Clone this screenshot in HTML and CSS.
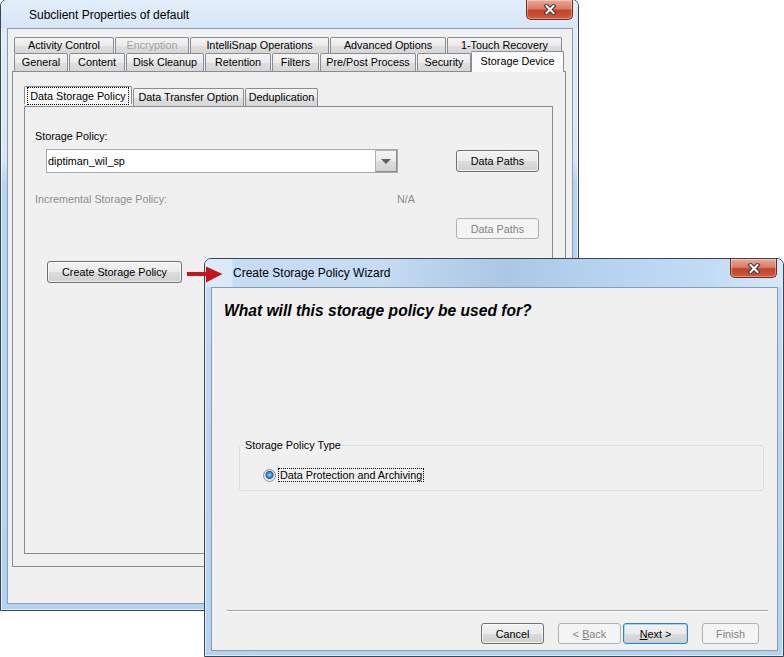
FILE: index.html
```html
<!DOCTYPE html>
<html>
<head>
<meta charset="utf-8">
<title>Subclient Properties of default</title>
<link rel="stylesheet" href="styles.css">
</head>
<body>
<div class="desktop">

	<!-- main properties dialog -->
	<div class="window props">
		<div class="titlebar">
			<span class="title">Subclient Properties of default</span>
			<span class="close">
				<svg width="14" height="11" viewBox="0 0 14 11"><path d="M3.5 2 L10.5 9 M10.5 2 L3.5 9" stroke="#3b3b3b" stroke-width="4.2" stroke-linecap="square"/><path d="M3.5 2 L10.5 9 M10.5 2 L3.5 9" stroke="#fff" stroke-width="2" stroke-linecap="square"/></svg>
			</span>
		</div>
		<div class="client">
			<div class="tabrow tabs-top">
				<span class="tab">Activity Control</span>
				<span class="tab disabled">Encryption</span>
				<span class="tab">IntelliSnap Operations</span>
				<span class="tab">Advanced Options</span>
				<span class="tab">1-Touch Recovery</span>
			</div>
			<div class="tabrow tabs-front">
				<span class="tab">General</span>
				<span class="tab">Content</span>
				<span class="tab">Disk Cleanup</span>
				<span class="tab">Retention</span>
				<span class="tab">Filters</span>
				<span class="tab">Pre/Post Process</span>
				<span class="tab">Security</span>
				<span class="tab selected">Storage Device</span>
			</div>
			<div class="tabpanel outer">
				<div class="tabrow tabs-inner">
					<span class="tab selected"><span class="focus">Data Storage Policy</span></span>
					<span class="tab">Data Transfer Option</span>
					<span class="tab">Deduplication</span>
				</div>
				<div class="tabpanel policy">
					<div class="field-label">Storage Policy:</div>
					<div class="policy-row">
						<div class="combo">
							<span class="combo-text">diptiman_wil_sp</span>
							<span class="combo-btn"><svg width="10" height="5" viewBox="0 0 10 5"><path d="M0 0 H10 L5 5 Z" fill="#606060"/></svg></span>
						</div>
						<button class="btn paths">Data Paths</button>
					</div>
					<div class="incr-row">
						<span class="muted incr-label">Incremental Storage Policy:</span>
						<span class="muted">N/A</span>
					</div>
					<div class="paths-row"><button class="btn paths" disabled>Data Paths</button></div>
					<button class="btn create">Create Storage Policy</button>
				</div>
			</div>
		</div>
	</div>

	<!-- wizard launched from the button -->
	<div class="window wizard">
		<div class="titlebar">
			<span class="title">Create Storage Policy Wizard</span>
			<span class="close">
				<svg width="14" height="11" viewBox="0 0 14 11"><path d="M3.5 2 L10.5 9 M10.5 2 L3.5 9" stroke="#3b3b3b" stroke-width="4.2" stroke-linecap="square"/><path d="M3.5 2 L10.5 9 M10.5 2 L3.5 9" stroke="#fff" stroke-width="2" stroke-linecap="square"/></svg>
			</span>
		</div>
		<div class="client">
			<h2 class="question">What will this storage policy be used for?</h2>
			<fieldset class="group">
				<legend>Storage Policy Type</legend>
				<label class="radio"><span class="radio-dot"></span><span class="focus">Data Protection and Archiving</span></label>
			</fieldset>
			<div class="footer">
				<div class="sep"></div>
				<div class="buttons">
					<button class="btn btn-cancel">Cancel</button>
					<button class="btn btn-back" disabled>&lt; <u>B</u>ack</button>
					<button class="btn btn-next"><u>N</u>ext &gt;</button>
					<button class="btn btn-finish" disabled>Finish</button>
				</div>
			</div>
		</div>
	</div>

	<svg class="pointer" width="36" height="17" viewBox="0 0 36 17">
		<rect x="0" y="6" width="20" height="4" fill="#c4161c"/>
		<path d="M19 0.5 L35.5 8 L19 16.5 Z" fill="#c4161c"/>
	</svg>

</div>
</body>
</html>
```

FILE: styles.css
```css
body {
	margin: 0;
	background: #fff;
	font-family: "Liberation Sans", Arial, sans-serif;
	font-size: 10.8px;
	color: #000;
}
.desktop {
	position: relative;
	width: 784px;
	height: 657px;
	overflow: hidden;
}

/* window chrome */
.window {
	position: absolute;
	box-sizing: border-box;
	display: flex;
	flex-direction: column;
	border: 1px solid #3a4554;
	border-radius: 7px 7px 0 0;
	box-shadow: inset 0 0 0 1px rgba(255, 255, 255, 0.6);
}
.props {
	left: 0;
	top: -1px;
	width: 579px;
	height: 612px;
	padding: 0 5px 6px 6px;
	background: linear-gradient(#dfebf8 0%, #d8e7f7 26%, #b7d4f3 30%, #b4d2f2 100%);
}
.wizard {
	left: 204px;
	top: 258px;
	width: 580px;
	height: 399px;
	padding: 0 5px 5px 6px;
	background: linear-gradient(#c4dbf3, #b4d2f2);
}
.titlebar {
	display: flex;
	justify-content: space-between;
	align-items: flex-start;
	height: 28px;
	margin: 0 -5px 0 -6px;
	padding-left: 28px;
	border-radius: 6px 6px 0 0;
	font-size: 12px;
	line-height: 14px;
}
.props .titlebar {
	background: linear-gradient(#e2edf9, #d7e6f7);
}
.wizard .titlebar {
	background: linear-gradient(to right, #dbeaf9 0%, #dbeaf9 4.5%, #c5dcf3 5%, #c5dcf3 30%, #aac7e5 52%, #b6d3f2 70%, #c3dcf5 88%, #d6e8f9 100%);
}
.props .title {
	padding-top: 8px;
}
.wizard .title {
	padding-top: 7px;
}
.close {
	display: flex;
	align-items: center;
	justify-content: center;
	box-sizing: border-box;
	width: 47px;
	height: 20px;
	margin-right: 5px;
	border: 1px solid #6e2b22;
	border-top: none;
	border-radius: 0 0 5px 5px;
	background: linear-gradient(#e9a899 0%, #dc7d68 45%, #c5422b 55%, #cf5a40 100%);
	box-shadow: inset 0 0 0 1px rgba(255, 255, 255, 0.35);
}
.wizard .close {
	width: 47px;
	height: 19px;
	margin-right: 6px;
}
.client {
	flex: 1;
	box-sizing: border-box;
	border: 1px solid #8a9bb0;
	background: #f0f0f0;
}

/* tabs */
.tabrow {
	display: flex;
	align-items: flex-start;
	gap: 1px;
}
.tab {
	box-sizing: border-box;
	border: 1px solid #898c95;
	border-bottom: none;
	border-radius: 2px 2px 0 0;
	background: linear-gradient(#f4f4f4 0%, #ebebeb 50%, #dfdfdf 51%, #d6d6d6 100%);
	text-align: center;
	white-space: nowrap;
}
.tab.disabled {
	color: #a3a3a3;
}
.tab.selected {
	position: relative;
	z-index: 1;
	height: 21px;
	margin-top: -2px;
	margin-bottom: -1px;
	background: #fbfbfb;
}
.tabs-top {
	margin: 8px 0 0 6px;
}
.tabs-top .tab {
	height: 16px;
	line-height: 15px;
}
.tabs-top .tab:nth-child(1) { width: 100px; }
.tabs-top .tab:nth-child(2) { width: 74px; }
.tabs-top .tab:nth-child(3) { width: 139px; }
.tabs-top .tab:nth-child(4) { width: 116px; }
.tabs-top .tab:nth-child(5) { width: 115px; }

.tabs-front {
	margin-left: 6px;
}
.tabs-front .tab {
	height: 18px;
	line-height: 17px;
}
.tabs-front .tab:nth-child(1) { width: 54px; }
.tabs-front .tab:nth-child(2) { width: 56px; }
.tabs-front .tab:nth-child(3) { width: 78px; }
.tabs-front .tab:nth-child(4) { width: 66px; }
.tabs-front .tab:nth-child(5) { width: 47px; }
.tabs-front .tab:nth-child(6) { width: 96px; }
.tabs-front .tab:nth-child(7) { width: 54px; }
.tabs-front .tab.selected {
	width: 93px;
	height: 21px;
	margin-left: -1px;
	line-height: 18px;
}

.tabpanel {
	box-sizing: border-box;
	border: 1px solid #898c95;
	background: #f0f0f0;
}
.outer {
	width: 554px;
	height: 496px;
	margin-left: 4px;
	padding: 16px 0 0 11px;
}
.tabs-inner .tab {
	height: 18px;
	line-height: 17px;
}
.tabs-inner .tab:nth-child(1) { width: 108px; }
.tabs-inner .tab:nth-child(2) { width: 111px; }
.tabs-inner .tab:nth-child(3) { width: 73px; }
.tabs-inner .tab.selected {
	display: flex;
	align-items: center;
	justify-content: center;
}
.focus {
	border: 1px dotted #000;
	padding: 0 1px;
	line-height: 12px;
}
.tabs-inner .focus {
	padding: 1px 2px;
	line-height: 14px;
}

/* data storage policy page */
.policy {
	width: 529px;
	height: 448px;
}
.field-label {
	margin: 22px 0 0 10px;
	line-height: 14px;
}
.policy-row {
	display: flex;
	align-items: center;
	margin-top: 6px;
}
.combo {
	display: flex;
	align-items: stretch;
	box-sizing: border-box;
	width: 352px;
	height: 24px;
	margin-left: 21px;
	border: 1px solid #a3a9b1;
	background: #fff;
}
.combo-text {
	flex: 1;
	padding-left: 1px;
	line-height: 22px;
}
.combo-btn {
	display: flex;
	align-items: center;
	justify-content: center;
	box-sizing: border-box;
	width: 22px;
	border: 1px solid #b1b1b1;
	border-right-color: #8c8c8c;
	border-bottom-color: #8c8c8c;
	background: linear-gradient(#f5f5f5 0%, #ececec 50%, #dedede 51%, #d2d2d2 100%);
}
.paths {
	width: 83px;
}
.policy-row .paths {
	margin-left: 58px;
}
.incr-row {
	display: flex;
	margin-top: 19px;
	padding-left: 10px;
	line-height: 14px;
}
.incr-label {
	width: 362px;
}
.muted {
	color: #8d8d8d;
}
.paths-row {
	margin: 12px 0 0 431px;
}
.paths-row .btn {
	height: 21px;
}
.create {
	width: 135px;
	margin: 22px 0 0 22px;
}

/* buttons */
.btn {
	box-sizing: border-box;
	display: block;
	height: 22px;
	padding: 0;
	border: 1px solid #707070;
	border-radius: 3px;
	background: linear-gradient(#f2f2f2 0%, #ebebeb 50%, #dddddd 51%, #cfcfcf 100%);
	box-shadow: inset 0 0 0 1px rgba(255, 255, 255, 0.65);
	font-family: inherit;
	font-size: inherit;
	color: #000;
}
.btn:disabled {
	border-color: #adb2b5;
	background: #f4f4f4;
	box-shadow: none;
	color: #838383;
}

/* wizard page */
.wizard .client {
	display: flex;
	flex-direction: column;
}
.question {
	margin: 13px 0 0 12px;
	font-size: 15.6px;
	font-style: italic;
	font-weight: bold;
	line-height: 20px;
}
.group {
	margin: 117px 13px 0 27px;
	padding: 0;
	border: 1px solid #d5dfe5;
	border-radius: 3px;
}
.group legend {
	margin-left: 4px;
	padding: 0 1px;
	line-height: 14px;
}
.radio {
	display: flex;
	align-items: center;
	gap: 2px;
	margin: 16px 0 8px 23px;
}
.radio-dot {
	box-sizing: border-box;
	width: 13px;
	height: 13px;
	border: 1px solid #8e8f8f;
	border-radius: 50%;
	background: radial-gradient(circle at 50% 45%, #a6e0fc 0, #3a9ad8 2px, #1c5f9a 3.6px, #dcdcdc 4.4px, #f7f7f7 6px);
}
.footer {
	margin-top: auto;
}
.sep {
	margin: 0 9px 0 15px;
	border-top: 1px solid #a0a0a0;
	border-bottom: 1px solid #fff;
}
.buttons {
	display: flex;
	justify-content: flex-end;
	margin-top: 11px;
	padding: 0 18px 6px 0;
}
.buttons .btn {
	height: 21px;
}
.btn-cancel {
	width: 63px;
	margin-right: 14px;
}
.btn-back {
	width: 63px;
	margin-right: 2px;
}
.btn-next {
	width: 65px;
	margin-right: 14px;
	border-color: #3c7fb1;
	box-shadow: inset 0 0 0 1px #9fd8f6;
}
.btn-finish {
	width: 57px;
}

.pointer {
	position: absolute;
	left: 187px;
	top: 266px;
}
```
